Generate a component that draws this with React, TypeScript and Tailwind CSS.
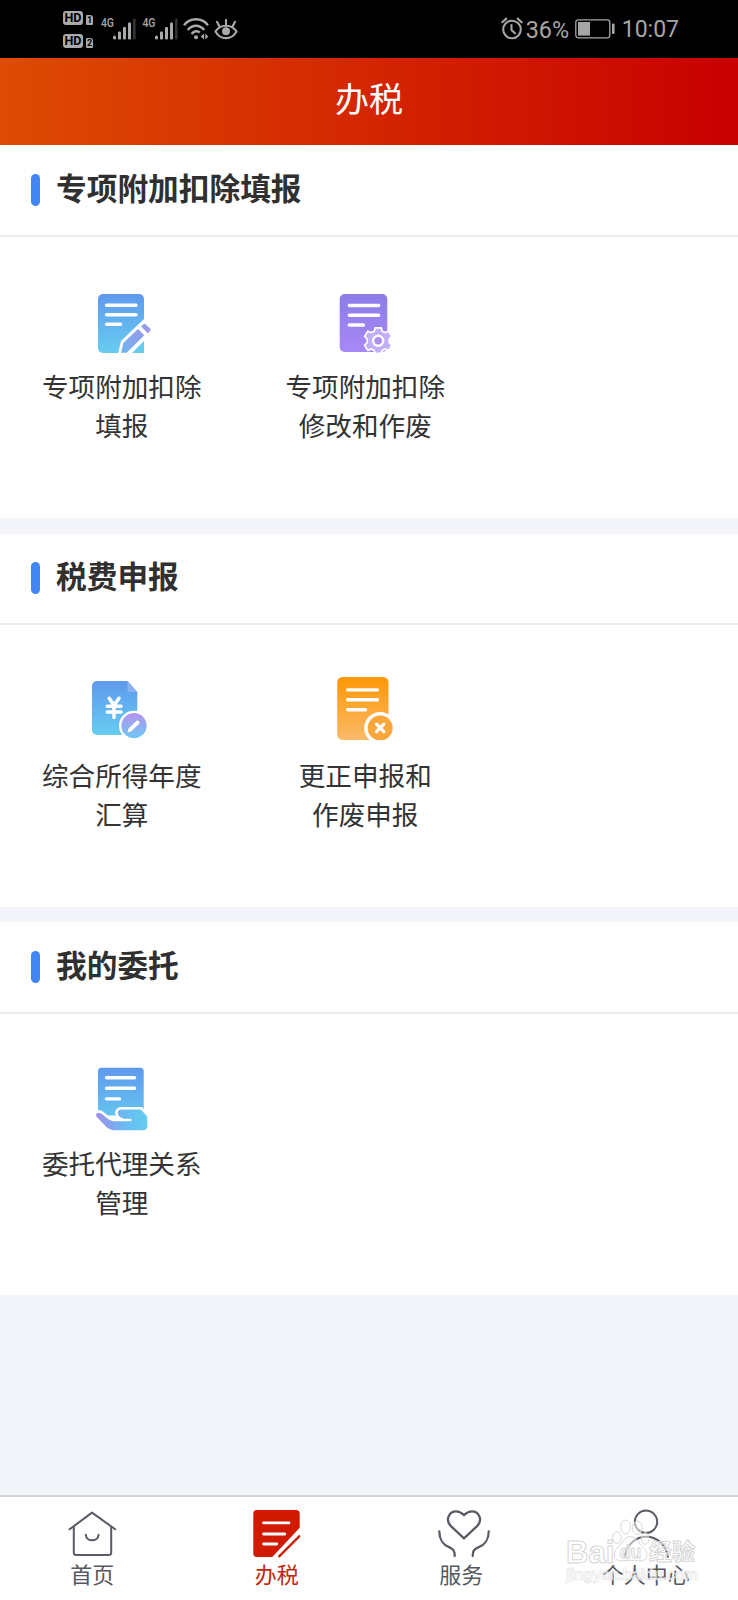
import { ReactNode } from "react"

type Entry = { icon: ReactNode; lines: string[] }
type Group = { title: string; items: Entry[] }

const DocLines = ({ ys, x1, x2, x3 }: { ys: number[]; x1: number; x2: number; x3: number }) => (
  <path
    d={`M${x1} ${ys[0]}H${x2}M${x1} ${ys[1]}H${x2}M${x1} ${ys[2]}H${x3}`}
    stroke="#fff"
    strokeWidth="3.4"
    strokeLinecap="round"
  />
)

const FillIcon = () => (
  <svg width="70" height="70" viewBox="0 0 70 70" fill="none">
    <defs>
      <linearGradient id="fillDoc" x1="0" y1="0" x2="0" y2="1">
        <stop stopColor="#5f99ee" />
        <stop offset="1" stopColor="#66cdf0" />
      </linearGradient>
      <linearGradient id="fillPen" x1="1" y1="0" x2="0" y2="1">
        <stop stopColor="#9a9bea" />
        <stop offset="1" stopColor="#6fb2f0" />
      </linearGradient>
    </defs>
    <rect x="11" y="6" width="46" height="59" rx="5" fill="url(#fillDoc)" />
    <DocLines ys={[17.3, 26.8, 36.2]} x1={19.5} x2={49} x3={33.5} />
    <path d="M31 66L34 53L57 31L68 42L44 66Z" fill="#fff" />
    <path d="M34 64.8L36.5 54.8L51 41L57.4 47.2L45.5 59L39.5 64.8Z" fill="url(#fillPen)" />
    <path d="M57 65h-10l10-10z" fill="#66cdf0" />
    <path d="M56.2 36.4a1.8 1.8 0 0 1 2.6 0l4.2 4a1.8 1.8 0 0 1 0 2.6l-2.2 2.2-6.8-6.6z" fill="#9a9bea" />
  </svg>
)

const EditIcon = () => (
  <svg width="70" height="70" viewBox="0 0 70 70" fill="none">
    <defs>
      <linearGradient id="editDoc" x1="0" y1="0" x2="0" y2="1">
        <stop stopColor="#8c7ce8" />
        <stop offset="1" stopColor="#a888f6" />
      </linearGradient>
    </defs>
    <rect x="9.7" y="6" width="47.6" height="58" rx="5" fill="url(#editDoc)" />
    <DocLines ys={[17.5, 27.3, 37]} x1={19.3} x2={48.7} x3={33.5} />
    <g transform="translate(48.2 52.8)">
      <path
        d="M-3 -13H3L4 -9.6L6.6 -8.2L10.4 -9.6L13.6 -4.4L11 -1.8V1.8L13.6 4.4L10.4 9.6L6.6 8.2L4 9.6L3 12.6H-3L-4 9.6L-6.6 8.2L-10.4 9.6L-13.6 4.4L-11 1.8V-1.8L-13.6 -4.4L-10.4 -9.6L-6.6 -8.2L-4 -9.6Z"
        fill="#c0aef8"
        stroke="#fff"
        strokeWidth="1.7"
        strokeLinejoin="round"
      />
      <circle r="5" fill="#ab8ff6" stroke="#fff" strokeWidth="2.4" />
    </g>
  </svg>
)

const YearIcon = () => (
  <svg width="70" height="70" viewBox="0 1 70 70" fill="none">
    <defs>
      <linearGradient id="yearDoc" x1="0" y1="0" x2="0" y2="1">
        <stop stopColor="#5f99ee" />
        <stop offset="1" stopColor="#66cdf0" />
      </linearGradient>
      <linearGradient id="yearPen" x1="0" y1="0" x2="0" y2="1">
        <stop stopColor="#b592ee" />
        <stop offset="1" stopColor="#6fc8f5" />
      </linearGradient>
    </defs>
    <path d="M10 5H40.5L50.3 16V59H10a5 5 0 0 1-5-5V10a5 5 0 0 1 5-5z" fill="url(#yearDoc)" />
    <path d="M40.5 5L50.3 16H42.5a2 2 0 0 1-2-2z" fill="#8db2f3" />
    <path
      d="M22.2 22.3L27 29.3L32 22.3M27 29.3V41.5M20.3 30.3H34M20.3 36H34"
      stroke="#fff"
      strokeWidth="3.6"
      strokeLinecap="round"
    />
    <circle cx="47" cy="49.7" r="15" fill="#fff" />
    <circle cx="47" cy="49.7" r="12.6" fill="url(#yearPen)" />
    <path d="M41 55.8L42 52.6L50.3 44.6L52.6 46.8L44.3 54.8Z" fill="#fff" stroke="#fff" strokeLinejoin="round" />
  </svg>
)

const CorrectIcon = () => (
  <svg width="70" height="70" viewBox="0.5 1.3 70 70" fill="none">
    <defs>
      <linearGradient id="correctDoc" x1="0" y1="0" x2="0" y2="1">
        <stop stopColor="#fd9705" />
        <stop offset="1" stopColor="#fcba68" />
      </linearGradient>
      <clipPath id="correctClip">
        <rect x="0" y="0" width="70" height="64.4" />
      </clipPath>
    </defs>
    <rect x="7.7" y="1.3" width="51.3" height="62.9" rx="5.5" fill="url(#correctDoc)" />
    <DocLines ys={[14.2, 24, 34]} x1={18.2} x2={48} x3={36} />
    <circle cx="50.7" cy="52.3" r="16" fill="#fff" />
    <circle cx="50.7" cy="52.3" r="12.5" fill="#fba63a" clipPath="url(#correctClip)" />
    <path d="M47 48.4l7.4 7.6M54.4 48.4L47 56" stroke="#fff" strokeWidth="3.2" strokeLinecap="round" />
  </svg>
)

const EntrustIcon = () => (
  <svg width="70" height="70" viewBox="0 -0.5 70 70" fill="none">
    <defs>
      <linearGradient id="entrustDoc" x1="0" y1="0" x2="0" y2="1">
        <stop stopColor="#5f99ee" />
        <stop offset="1" stopColor="#64c4f0" />
      </linearGradient>
      <linearGradient id="entrustHand" x1="0" y1="0" x2="1" y2="0">
        <stop stopColor="#a08fea" />
        <stop offset="0.6" stopColor="#66bdf2" />
        <stop offset="1" stopColor="#66cdf0" />
      </linearGradient>
    </defs>
    <path d="M14.5 2.3H53.2a3.5 3.5 0 0 1 3.5 3.5V50H11V5.8a3.5 3.5 0 0 1 3.5-3.5z" fill="url(#entrustDoc)" />
    <DocLines ys={[12.3, 22.8, 33.4]} x1={19.5} x2={47.5} x3={32.5} />
    <path
      d="M9.3 48.3C11 46.6 14 47.2 16 48.8L23 53.8C26 54.5 29 53.8 32 53.6C28 51 28 43.4 33.5 42.8H54L60.3 49.5V62.5L57.5 64.8H25.5L20.5 62.5L9.6 51.3Q8.3 49.5 9.3 48.3Z"
      fill="url(#entrustHand)"
    />
    <path
      d="M10 46.2C13 45 15 47 17 48.5C22 52.5 23.5 54.5 27 54.5H43.2M35 53.8C28.5 51.5 27 43 34.5 42.8H54.5L61 50"
      stroke="#fff"
      strokeWidth="2.6"
      strokeLinecap="round"
      strokeLinejoin="round"
    />
  </svg>
)

const groups: Group[] = [
  {
    title: "专项附加扣除填报",
    items: [
      { icon: <FillIcon />, lines: ["专项附加扣除", "填报"] },
      { icon: <EditIcon />, lines: ["专项附加扣除", "修改和作废"] },
    ],
  },
  {
    title: "税费申报",
    items: [
      { icon: <YearIcon />, lines: ["综合所得年度", "汇算"] },
      { icon: <CorrectIcon />, lines: ["更正申报和", "作废申报"] },
    ],
  },
  {
    title: "我的委托",
    items: [{ icon: <EntrustIcon />, lines: ["委托代理关系", "管理"] }],
  },
]

const tabs = [
  {
    label: "首页",
    icon: (
      <g stroke="#5a5b66" strokeWidth="2" strokeLinecap="round" strokeLinejoin="round">
        <path d="M7.6 21.3L30 4.6L53.2 21.3" />
        <path d="M11.8 19V44.5a2.6 2.6 0 0 0 2.6 2.6H46.6a2.6 2.6 0 0 0 2.6-2.6V19" />
        <path d="M23.8 26.8C24.4 34.2 36 34.2 36.6 26.8" />
      </g>
    ),
  },
  {
    label: "办税",
    active: true,
    icon: (
      <g>
        <path d="M10 2H49a3.7 3.7 0 0 1 3.7 3.7V19.7L25.3 49H10a3.7 3.7 0 0 1-3.7-3.7V5.7A3.7 3.7 0 0 1 10 2z" fill="#d01a02" />
        <path d="M16.5 14.8H42M16.5 26H37.8M16.5 36H29.8" stroke="#fff" strokeWidth="2.8" strokeLinecap="round" />
        <path d="M52.2 28.3L32.2 48.3" stroke="#c2260f" strokeWidth="2.4" strokeLinecap="round" />
      </g>
    ),
  },
  {
    label: "服务",
    icon: (
      <g stroke="#5a5b66" strokeWidth="2.3" strokeLinecap="round" strokeLinejoin="round">
        <path d="M33 30.3L19.4 17.6C14 11.5 18.5 3.2 25.2 3.3C28.8 3.3 31 5.3 33 7C35 5.3 37.2 3.3 40.8 3.3C47.5 3.2 52 11.5 46.6 17.6Z" />
        <path d="M8.3 23.5C8.5 32 11.3 36.5 18.5 39.4C22.5 41.2 23.7 43 23.7 48" />
        <path d="M57.7 23.5C57.5 32 54.7 36.5 47.2 39.4C43 41.2 41.7 43 41.7 48" />
      </g>
    ),
  },
  {
    label: "个人中心",
    icon: (
      <g stroke="#5a5b66" strokeWidth="2" strokeLinecap="round">
        <circle cx="30" cy="13.8" r="11.2" />
        <path d="M8.8 48.8C13 22 47.5 22 52 48.8" />
      </g>
    ),
  },
]

const Signal = () => (
  <svg width="24" height="22" viewBox="0 0 24 22" fill="#aaa">
    <rect x="0" y="17.5" width="3" height="4" rx="1.5" />
    <rect x="5" y="13.5" width="3" height="8" rx="1" />
    <rect x="10" y="9" width="3" height="12.5" rx="1" />
    <rect x="15" y="4.5" width="3" height="17" rx="1" />
    <rect x="20" y="0.5" width="2.6" height="21" rx="1" fill="#333" />
  </svg>
)

const Hd = ({ n }: { n: string }) => (
  <div className="flex h-[14px] items-end gap-[3px]">
    <span className="flex h-[14px] w-5 items-center justify-center rounded-[3px] bg-[#aaa] text-[12.5px] leading-none font-bold text-black">HD</span>
    <span className="flex h-[10px] w-[7px] items-center justify-center rounded-[1px] rounded-tr-[3px] bg-[#aaa] text-[9px] leading-none font-bold text-black">{n}</span>
  </div>
)

const StatusBar = () => (
  <div className="flex h-[58px] items-start bg-black font-['Roboto',sans-serif] text-[#a6a6a6]">
    <div className="mt-[11px] ml-[63px] flex w-[38px] flex-col gap-[9px]">
      <Hd n="1" />
      <Hd n="2" />
    </div>
    <div className="mt-[18px] flex">
      {[1, 2].map((i) => (
        <div key={i} className="flex w-[41.5px]">
          <span className="w-3 shrink-0 origin-left scale-y-120 text-[10.5px] leading-[11px] font-medium tracking-tight">4G</span>
          <Signal />
        </div>
      ))}
    </div>
    <svg className="mt-[18px] -ml-px" width="26" height="22" viewBox="0 0 26 22" fill="none" stroke="#aaa" strokeWidth="2.5">
      <path d="M1 7.2C7.5 -0.6 18.5 -0.6 25 7.2" />
      <path d="M4.8 12C9.5 6.4 16.5 6.4 21.2 12" />
      <path d="M8.6 16C11 12.8 14.5 12.5 16.8 14.5" />
      <circle cx="13" cy="19.2" r="2" fill="#aaa" stroke="none" />
      <path d="M21 15.5v6l-3.3-3zM22.3 15.5v6l3-3z" fill="#aaa" stroke="none" />
    </svg>
    <svg className="mt-[19px] ml-[5px]" width="24" height="22" viewBox="0 0 24 22" fill="none" stroke="#aaa" strokeWidth="2.1">
      <path d="M1.5 12.4C6.5 4.8 17.5 4.8 22.5 12.4C17.5 21.4 6.5 21.4 1.5 12.4Z" />
      <circle cx="12" cy="12.2" r="4" fill="#aaa" stroke="none" />
      <path d="M12 6.5V1M5.8 8L3 2.8M18.2 8L21 2.8" strokeLinecap="round" />
    </svg>

    <div className="mt-[16px] mr-[59px] ml-auto flex h-6 items-center">
      <svg width="22" height="23" viewBox="0 0 22 23" fill="none" stroke="#a6a6a6" strokeWidth="2.1" strokeLinecap="round">
        <circle cx="11" cy="12.5" r="8.8" />
        <path d="M10.5 8V13L14 16.2M1.3 5.2L5.3 1.6M20.7 5.2L16.7 1.6" />
      </svg>
      <span className="mt-[3px] ml-[3px] w-[49px] text-[23.3px] leading-6">36%</span>
      <svg className="mt-px" width="41" height="20" viewBox="0 0 41 20" fill="none">
        <rect x="0.8" y="0.8" width="34" height="18" rx="2.5" stroke="#a6a6a6" strokeWidth="1.3" />
        <rect x="3" y="3" width="12" height="13.6" fill="#a6a6a6" />
        <rect x="37" y="4.5" width="2.6" height="10.5" rx="1" fill="#a6a6a6" />
      </svg>
      <span className="mt-[3px] ml-[6px] text-[23px] leading-6">10:07</span>
    </div>
  </div>
)

const Section = ({ title, items }: Group) => (
  <section className="bg-white">
    <div className="flex h-[91.5px] items-center border-b-2 border-[#ececec] pl-[31px]">
      <span className="h-8 w-[9px] rounded-full bg-[#4285f4]" />
      <h2 className="mb-[6px] ml-4 text-[30.7px] leading-10 font-bold text-[#303030]">{title}</h2>
    </div>
    <div className="flex h-[281.5px] pt-[51.5px]">
      {items.map((item) => (
        <div key={item.lines.join("")} className="flex w-[243.5px] flex-col items-center">
          {item.icon}
          <p className="mt-[8px] text-center text-[26.6px] leading-[39px] text-[#333]">
            {item.lines.map((line) => (
              <span key={line} className="block">{line}</span>
            ))}
          </p>
        </div>
      ))}
    </div>
  </section>
)

const Watermark = () => (
  <div className="pointer-events-none absolute top-[22px] left-[566px] h-[66px] w-[134px] font-['Liberation_Sans','Noto_Sans_CJK_SC',sans-serif] font-bold">
    <div className="flex h-[44px] items-end text-white/50 [-webkit-text-stroke:1px_#d6d6d6]">
      <span className="-mb-[5px] w-[46px] shrink-0 text-[31px] leading-[30px]">Bai</span>
      <svg className="shrink-0" width="37" height="45" viewBox="0 0 38 46" fill="#fff" fillOpacity="0.5" stroke="#d6d6d6">
        <ellipse cx="5" cy="20" rx="4.5" ry="6" />
        <ellipse cx="14" cy="9" rx="5" ry="7" />
        <ellipse cx="26" cy="10" rx="5" ry="7" />
        <ellipse cx="34" cy="21" rx="4" ry="6" />
        <path d="M19 19C26 19 27 27 33 31C39 37 35 45 28 44C22 43 16 43 10 44C3 45 0 37 5 31C11 27 12 19 19 19Z" />
        <text x="19" y="41" textAnchor="middle" fontSize="18" fontWeight="700">du</text>
      </svg>
      <span className="-mb-[5px] text-[23px] leading-[31px] whitespace-nowrap">经验</span>
    </div>
    <p className="mt-[2px] text-[16px] leading-5 tracking-[-0.5px] text-white/60 [-webkit-text-stroke:0.6px_#e0e0e0]">jingyan.baidu.com</p>
  </div>
)

const App = () => {
  return (
    <main className="flex h-[1600px] w-[738px] flex-col overflow-hidden bg-[#f3f5fa] font-['Noto_Sans_CJK_SC',sans-serif]">
      <StatusBar />
      <header className="flex h-[87px] items-center justify-center bg-linear-to-r/srgb from-[#de4b03] to-[#c80000] pb-[7px]">
        <h1 className="text-[34px] leading-none text-white">办税</h1>
      </header>
      <div className="flex flex-col gap-[15.5px]">
        {groups.map((group) => (
          <Section key={group.title} {...group} />
        ))}
      </div>
      <nav className="relative mt-auto flex h-[105px] border-t-2 border-[#d3d4d8] bg-white">
        {tabs.map((tab) => (
          <div key={tab.label} className="flex flex-1 flex-col items-center pt-[11px]">
            <svg width="60" height="50" viewBox="0 0 60 50" fill="none">{tab.icon}</svg>
            <span className={`mt-[3px] text-[22px] leading-6 ${tab.active ? "text-[#c2260f]" : "text-[#56575f]"}`}>{tab.label}</span>
          </div>
        ))}
        <Watermark />
      </nav>
    </main>
  )
}

export default App
